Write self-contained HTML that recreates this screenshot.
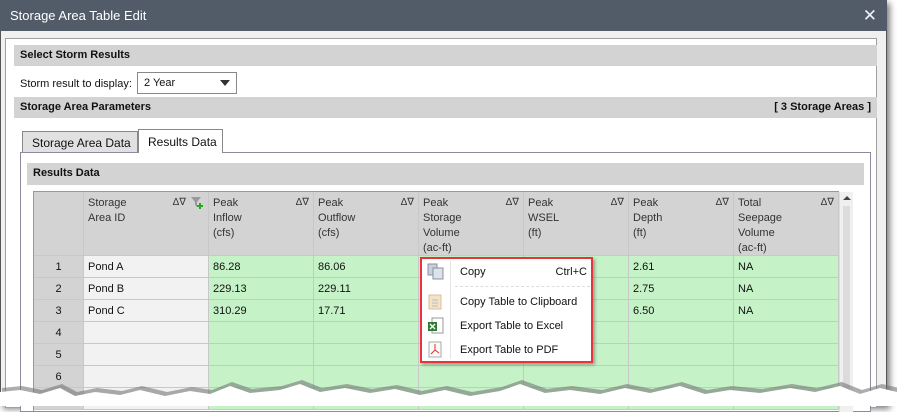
<!DOCTYPE html>
<html><head><style>
*{margin:0;padding:0;box-sizing:border-box}
body{width:897px;height:406px;background:#fff;font-family:"Liberation Sans",sans-serif;font-size:11px;color:#111;position:relative;overflow:hidden}
.a{position:absolute;white-space:nowrap}
.dlg{left:0;top:0;width:887px;height:406px;background:#f0f0f0;border:1px solid #555;box-shadow:3px 3px 6px rgba(0,0,0,.5)}
.title{left:0;top:0;width:887px;height:31px;background:#525c69;color:#fff;font-size:13px;line-height:31px;padding-left:10px}
.hdr{background:#d3d3d3;font-weight:bold;font-size:11px;padding-left:6px;line-height:21px}
.cell{position:absolute;border-right:1px solid #c8c8c8;border-bottom:1px solid #c8c8c8;padding:4px 4px;line-height:15px;white-space:nowrap}
.h{background:#d3d3d3;color:#333}
.g{background:#c6f2c8}
.w{background:#f2f2f2}
.rh{background:#d3d3d3;text-align:center}
.sort{position:absolute;right:4px;top:3px;font-size:10px;color:#333}
.mi{position:absolute;left:38px;font-size:11px}
</style></head><body>
<div class="a dlg"></div>
<div class="a title">Storage Area Table Edit<span style="position:absolute;right:10px;top:0;font-size:17px;font-weight:300;color:#eef">✕</span></div>
<div class="a" style="left:5px;top:38px;width:872px;height:370px;background:#fff;border:1px solid #a0a0a0"></div>
<div class="a hdr" style="left:14px;top:45px;width:863px;height:21px">Select Storm Results</div>
<div class="a" style="left:20px;top:78px">Storm result to display:</div>
<div class="a" style="left:137px;top:72px;width:100px;height:22px;border:1px solid #888;background:#fff;padding:4px 6px">2 Year<span style="position:absolute;right:6px;top:7px;border-left:5px solid transparent;border-right:5px solid transparent;border-top:6px solid #333"></span></div>
<div class="a hdr" style="left:14px;top:97px;width:863px;height:21px">Storage Area Parameters<span style="position:absolute;right:6px;font-weight:bold;font-size:11px">[ 3 Storage Areas ]</span></div>
<div class="a" style="left:22px;top:131px;width:116px;height:22px;background:#e1e1e1;border:1px solid #888;border-bottom:none;padding:4px 9px;font-size:12px">Storage Area Data</div>
<div class="a" style="left:20px;top:152px;width:851px;height:260px;border:1px solid #8b8ba0;background:#fff"></div>
<div class="a" style="left:138px;top:129px;width:85px;height:24px;background:#fff;border:1px solid #888;border-bottom:none;padding:5px 9px;font-size:12px">Results Data</div>
<div class="a hdr" style="left:27px;top:163px;width:837px;height:22px">Results Data</div>
<div class="a" style="left:33px;top:191px;width:806px;height:220px;border-top:1px solid #999;border-left:1px solid #999;background:#fff"></div>
<div class="cell h" style="left:34px;top:192px;width:50px;height:64px"></div>
<div class="cell h" style="left:84px;top:192px;width:125px;height:64px">Storage<br>Area ID<span class="sort" style="right:22px">Δ∇</span><svg class="a" style="right:4px;top:3px" width="14" height="14"><path d="M1 2h10L7 7v5L5 10V7z" fill="#999"/><path d="M10 8v6M7 11h6" stroke="#2a2" stroke-width="2"/></svg></div>
<div class="cell h" style="left:209px;top:192px;width:105px;height:64px">Peak<br>Inflow<br>(cfs)<span class="sort">Δ∇</span></div>
<div class="cell h" style="left:314px;top:192px;width:105px;height:64px">Peak<br>Outflow<br>(cfs)<span class="sort">Δ∇</span></div>
<div class="cell h" style="left:419px;top:192px;width:105px;height:64px">Peak<br>Storage<br>Volume<br>(ac-ft)<span class="sort">Δ∇</span></div>
<div class="cell h" style="left:524px;top:192px;width:105px;height:64px">Peak<br>WSEL<br>(ft)<span class="sort">Δ∇</span></div>
<div class="cell h" style="left:629px;top:192px;width:105px;height:64px">Peak<br>Depth<br>(ft)<span class="sort">Δ∇</span></div>
<div class="cell h" style="left:734px;top:192px;width:105px;height:64px">Total<br>Seepage<br>Volume<br>(ac-ft)<span class="sort">Δ∇</span></div>
<div class="a" style="left:839px;top:192px;width:14px;height:220px;background:#f0f0f0;border-left:1px solid #ddd"><div class="a" style="left:3px;top:4px;border-left:4px solid transparent;border-right:4px solid transparent;border-bottom:4px solid #444"></div><div class="a" style="left:3px;top:14px;width:7px;height:200px;background:#dcdcdc"></div></div>
<div id="rows"></div>
<script>
var d=[["Pond A","86.28","86.06","","","2.61","NA"],["Pond B","229.13","229.11","","","2.75","NA"],["Pond C","310.29","17.71","","","6.50","NA"],["","","","","","",""],["","","","","","",""],["","","","","","",""],["","","","","","",""]];
var xs=[209,314,419,524,629,734],h="";
d.forEach(function(r,i){var y=256+i*22;
h+='<div class="cell rh" style="left:34px;top:'+y+'px;width:50px;height:22px">'+(i+1)+'</div>';
h+='<div class="cell w" style="left:84px;top:'+y+'px;width:125px;height:22px">'+r[0]+'</div>';
xs.forEach(function(x,j){h+='<div class="cell g" style="left:'+x+'px;top:'+y+'px;width:105px;height:22px">'+r[j+1]+'</div>';});});
document.getElementById('rows').innerHTML=h;
</script>
<div class="a" style="left:420px;top:257px;width:173px;height:106px;background:#fff;border:2px solid #e8333a;box-shadow:2px 2px 3px rgba(0,0,0,.3)">
<div class="a" style="left:28px;top:2px;width:1px;height:98px;background:#e4e4e4"></div>
<svg class="a" style="left:5px;top:4px" width="18" height="18"><rect x="1" y="1" width="9" height="11" fill="#c8d0dc" stroke="#8890a0"/><rect x="6" y="5" width="10" height="11" fill="#dde3ec" stroke="#8890a0"/></svg>
<div class="mi" style="top:7px">Copy</div><div class="a" style="right:4px;top:7px">Ctrl+C</div>
<div class="a" style="left:33px;top:27px;width:135px;border-top:1px dashed #ddd"></div>
<svg class="a" style="left:6px;top:34px" width="16" height="18"><rect x="1" y="2" width="12" height="14" fill="#f3e4c8" stroke="#d8c098"/><path d="M4 7h6M4 10h6M4 13h6" stroke="#bbb"/></svg>
<div class="mi" style="top:37px">Copy Table to Clipboard</div>
<svg class="a" style="left:5px;top:58px" width="18" height="18"><rect x="5" y="1" width="11" height="15" fill="#fff" stroke="#999"/><rect x="1" y="5" width="9" height="9" fill="#2e7d32"/><path d="M3 7l5 5M8 7l-5 5" stroke="#fff" stroke-width="1.3"/></svg>
<div class="mi" style="top:61px">Export Table to Excel</div>
<svg class="a" style="left:6px;top:82px" width="16" height="18"><rect x="1" y="1" width="12" height="15" fill="#fafafa" stroke="#aaa"/><path d="M7 3v6l-4 4M7 9l4 3" stroke="#d33" fill="none"/></svg>
<div class="mi" style="top:85px">Export Table to PDF</div>
</div>
<svg class="a" style="left:0;top:370px" width="897" height="36">
<path d="M0 14 L20 12 L40 16 L60 10 L75 18 L95 14 L120 17 L140 12 L165 18 L190 13 L210 16 L230 8 L250 15 L280 12 L300 6 L320 14 L345 10 L370 15 L395 11 L420 17 L445 12 L470 18 L500 13 L520 6 L545 15 L570 12 L600 16 L625 10 L650 15 L680 8 L705 16 L730 12 L760 15 L790 10 L815 14 L840 8 L860 16 L880 10 L897 14 L897 36 L0 36 Z" fill="#777" transform="translate(2,4)" opacity=".6"/>
<path d="M0 14 L20 12 L40 16 L60 10 L75 18 L95 14 L120 17 L140 12 L165 18 L190 13 L210 16 L230 8 L250 15 L280 12 L300 6 L320 14 L345 10 L370 15 L395 11 L420 17 L445 12 L470 18 L500 13 L520 6 L545 15 L570 12 L600 16 L625 10 L650 15 L680 8 L705 16 L730 12 L760 15 L790 10 L815 14 L840 8 L860 16 L880 10 L897 14 L897 36 L0 36 Z" fill="#fff" transform="translate(0,8)"/>
</svg>
</body></html>
